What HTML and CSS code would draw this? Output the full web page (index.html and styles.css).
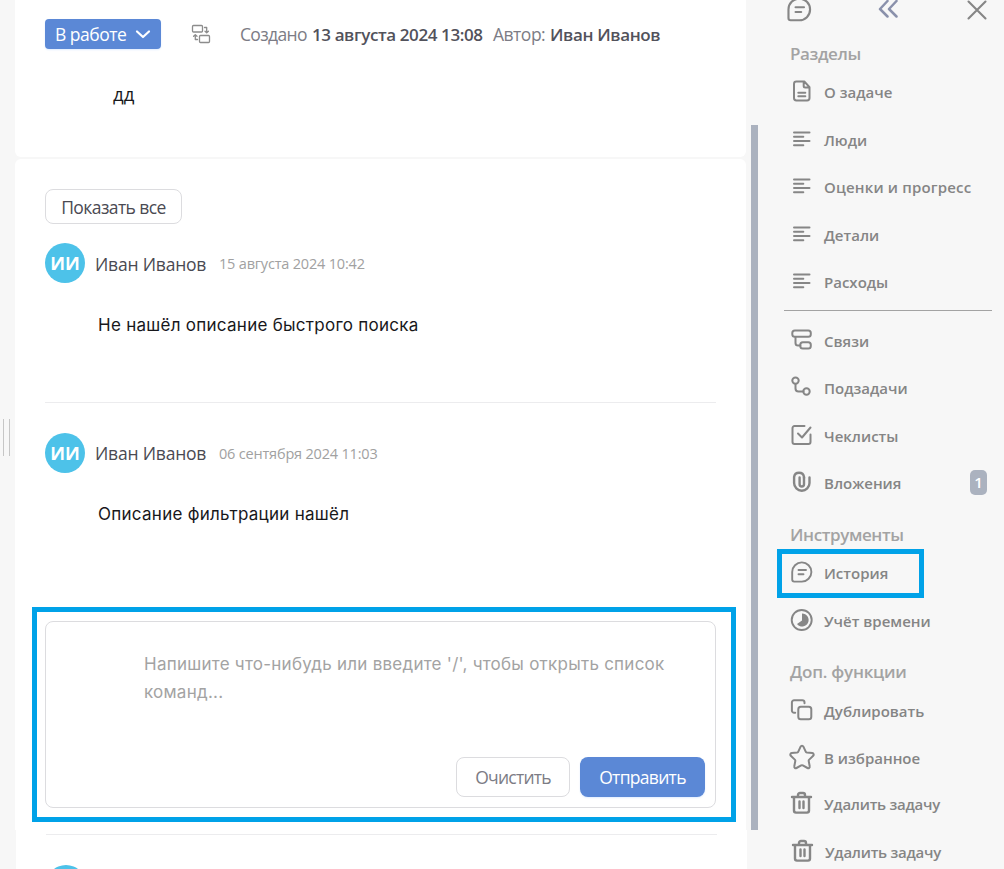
FILE: index.html
```
<!DOCTYPE html>
<html lang="ru">
<head>
<meta charset="utf-8">
<title>Задача</title>
<link rel="stylesheet" href="styles.css">
</head>
<body>
<svg class="defs" width="0" height="0">
  <symbol id="i-chat" viewBox="0 0 24 24"><path d="M2.200 12A9.600 9.600 0 1 1 11.800 21.600H4.200a2 2 0 0 1-2-2zM8.500 10h7.500M8.500 14.200h5"/></symbol>
  <symbol id="i-doc" viewBox="0 0 24 24"><path d="M6.500 2.500h7.800L19.500 8.200v10.900a2.400 2.400 0 0 1-2.400 2.400H6.400a2.400 2.400 0 0 1-2.400-2.400V4.900a2.400 2.400 0 0 1 2.400-2.400zM13.700 2.700v4.300a1.500 1.500 0 0 0 1.500 1.500h4.300M8.300 13.800h7M8.300 17.200h7"/></symbol>
  <symbol id="i-lines" viewBox="0 0 24 24"><path d="M4 5.500h15.500M4 9.700h9.300M4 14h15.500M4 18.300h9.300"/></symbol>
  <symbol id="i-links" viewBox="0 0 24 24"><rect x="2.300" y="2.500" width="18.500" height="6.300" rx="2.500"/><rect x="10.300" y="14.300" width="10.500" height="6.300" rx="2.500"/><path d="M5.500 9v6a2.500 2.500 0 0 0 2.500 2.500h2.300"/></symbol>
  <symbol id="i-sub" viewBox="0 0 24 24"><circle cx="5.500" cy="5.600" r="3.200"/><circle cx="16.500" cy="16.500" r="3.200"/><path d="M5.500 9v4.500a3 3 0 0 0 3 3h5"/></symbol>
  <symbol id="i-check" viewBox="0 0 24 24"><path d="M14.500 3H4.500A2 2 0 0 0 2.500 5v14a2 2 0 0 0 2 2h14a2 2 0 0 0 2-2v-7.500M8 10.500l4 4L20.500 4.500"/></symbol>
  <symbol id="i-clip" viewBox="0 0 24 24"><path d="M14 7.500v6.800a2.200 2.200 0 0 1-4.400 0V7.500"/><path d="M14 8V7a5 5 0 0 0-9.900 0v6a7.700 7.700 0 0 0 15.400 0V7.500"/></symbol>
  <symbol id="i-time" viewBox="0 0 24 24"><circle cx="11.700" cy="12" r="10"/><path class="solid" d="M12 5.500a6.500 6.500 0 1 1-5 10.500L12 12.500z"/></symbol>
  <symbol id="i-copy" viewBox="0 0 24 24"><rect x="8.300" y="8.700" width="13" height="12.600" rx="2.500"/><path d="M5.200 14.800H4.100A2.200 2.200 0 0 1 1.900 12.600V4.400A2.200 2.200 0 0 1 4.100 2.200h8.200a2.200 2.200 0 0 1 2.200 2.200v.8"/></symbol>
  <symbol id="i-star" viewBox="0 0 26 26"><path d="M11.600 2.600c.6-1.300 2.200-1.300 2.800 0l2.300 5c.2.500.7.800 1.200.9l5.400.6c1.300.2 1.800 1.700.9 2.700l-4 3.800c-.4.400-.6.900-.5 1.400l1 5.300c.3 1.300-1 2.300-2.200 1.700l-4.700-2.600a1.600 1.600 0 0 0-1.600 0L7.500 24c-1.200.6-2.500-.4-2.200-1.700l1-5.300c.1-.5-.1-1-.5-1.400l-4-3.800c-.9-1-.4-2.500.9-2.700l5.400-.6c.5-.1 1-.4 1.200-.9z"/></symbol>
  <symbol id="i-trash" viewBox="0 0 24 24"><path d="M2 6h19M4 6v13.600a2 2 0 0 0 2 2h11a2 2 0 0 0 2-2V6M8 5.500V4a2 2 0 0 1 2-2h3a2 2 0 0 1 2 2v1.500M9.500 10.500v6.500M13.500 10.500v6.500"/></symbol>
</svg>
<div class="app">
  <div class="gutter"><span class="grip"></span></div>
  <main class="main">
    <section class="card head">
      <div class="meta">
        <button class="status"><span>В работе</span><svg width="16" height="10" viewBox="0 0 16 10"><path d="M2 2.500L8 8l6-5.500"/></svg></button>
        <svg class="move" width="20" height="20" viewBox="0 0 20 20"><rect x="1.500" y="1.500" width="10" height="6.500" rx="1"/><rect x="8.500" y="11.500" width="10" height="7" rx="1"/><path d="M13.500 3.500h2.200v5M14 7.200l1.700 1.700 1.700-1.700M6.500 15.500H4.300v-4.700M2.600 12.300l1.700-1.700L6 12.300"/></svg>
        <span class="m-created">Создано</span><b class="m-date">13 августа 2024 13:08</b><span class="m-author">Автор:</span><b class="m-name">Иван Иванов</b>
      </div>
      <p class="title">дд</p>
    </section>
    <section class="card feed">
      <button class="btn all">Показать все</button>
      <article class="comment">
        <header><span class="avatar">ИИ</span><span class="who">Иван Иванов</span><time>15 августа 2024 10:42</time></header>
        <p>Не нашёл описание быстрого поиска</p>
      </article>
      <article class="comment second">
        <header><span class="avatar">ИИ</span><span class="who">Иван Иванов</span><time>06 сентября 2024 11:03</time></header>
        <p>Описание фильтрации нашёл</p>
      </article>
      <div class="mark">
        <div class="editor">
          <p>Напишите что-нибудь или введите '/', чтобы открыть список<br>команд...</p>
          <div class="actions"><button class="btn clear">Очистить</button><button class="btn send">Отправить</button></div>
        </div>
      </div>
    </section>
    <section class="rest"><div class="next"><span class="avatar"></span></div></section>
  </main>
  <div class="scroll"><span></span></div>
  <aside class="side">
    <div class="tools">
      <svg class="ic big"><use href="#i-chat"/></svg>
      <svg class="dbl" width="22" height="20" viewBox="0 0 22 20"><path d="M9.500 1L2 9l7.500 7.500M18.500 1L11 9l7.500 7.500"/></svg>
      <svg class="close" width="20" height="20" viewBox="0 0 20 20"><path d="M1.500 1.500l17 17M18.500 1.500l-17 17"/></svg>
    </div>
    <h3 class="sections">Разделы</h3>
    <nav>
      <a class="row"><svg class="ic"><use href="#i-doc"/></svg><span>О задаче</span></a>
      <a class="row"><svg class="ic"><use href="#i-lines"/></svg><span>Люди</span></a>
      <a class="row"><svg class="ic"><use href="#i-lines"/></svg><span class="wide">Оценки и прогресс</span></a>
      <a class="row"><svg class="ic"><use href="#i-lines"/></svg><span>Детали</span></a>
      <a class="row"><svg class="ic"><use href="#i-lines"/></svg><span>Расходы</span></a>
    </nav>
    <hr>
    <nav>
      <a class="row"><svg class="ic"><use href="#i-links"/></svg><span>Связи</span></a>
      <a class="row"><svg class="ic"><use href="#i-sub"/></svg><span>Подзадачи</span></a>
      <a class="row"><svg class="ic"><use href="#i-check"/></svg><span>Чеклисты</span></a>
      <a class="row"><svg class="ic bold"><use href="#i-clip"/></svg><span>Вложения</span><i class="count">1</i></a>
    </nav>
    <h3 class="instruments">Инструменты</h3>
    <nav>
      <a class="row picked"><svg class="ic mid"><use href="#i-chat"/></svg><span>История</span></a>
      <a class="row"><svg class="ic mid"><use href="#i-time"/></svg><span>Учёт времени</span></a>
    </nav>
    <h3 class="extra">Доп. функции</h3>
    <nav>
      <a class="row"><svg class="ic"><use href="#i-copy"/></svg><span>Дублировать</span></a>
      <a class="row fav"><svg class="ic star"><use href="#i-star"/></svg><span>В избранное</span></a>
      <a class="row short"><svg class="ic bold"><use href="#i-trash"/></svg><span class="tight">Удалить задачу</span></a>
      <a class="row last"><svg class="ic bold"><use href="#i-trash"/></svg><span class="tight">Удалить задачу</span></a>
    </nav>
  </aside>
</div>
</body>
</html>
```
FILE: styles.css
```
* { box-sizing: border-box; }
body { margin: 0; background: #f7f7f7; font-family: "Open Sans", "Noto Sans", sans-serif; color: #54545c; overflow: hidden; }
p, h3 { margin: 0; }
.defs { display: block; position: absolute; }
.app { display: flex; width: 1004px; height: 869px; overflow: hidden; }
svg { fill: none; stroke: #868686; stroke-width: 1.6; stroke-linecap: round; stroke-linejoin: round; flex: none; overflow: visible; }
button { font: inherit; margin: 0; padding: 0; }

.gutter { width: 15px; padding: 419px 0 0 3px; }
.grip { display: block; width: 7px; height: 37px; border: solid #c6c6c6; border-width: 0 1px; }

.main { width: 732px; flex: none; white-space: nowrap; }
.card { width: 731px; background: #fff; padding: 0 30px; }
.head { height: 157px; border-radius: 0 0 6px 6px; padding-top: 19px; }
.meta { display: flex; align-items: center; height: 30px; font-size: 17.5px; font-weight: 400; color: #7c7c85; }
.meta b { font-size: 17px; font-weight: 600; color: #52525b; }
.status { display: flex; align-items: center; width: 116px; height: 30px; padding: 0 10px; border: 0; border-radius: 4px; background: #5b88d6; box-shadow: 0 1px 2px #e0edff; color: #fff; font-weight: 400; letter-spacing: -.5px; justify-content: space-between; }
.status svg { stroke: #fff; stroke-width: 2.2; }
.move { margin: 0 29px 0 30px; stroke: #8c8c8c; stroke-width: 1.3; }
.m-created { width: 72px; letter-spacing: -.65px; }
.m-date { width: 181px; letter-spacing: -.4px; }
.m-author { width: 57px; letter-spacing: -.5px; }
.m-name { letter-spacing: -.36px; }
.title { margin: 33px 0 0 68px; font: 400 18.5px/24px "Open Sans", sans-serif; color: #18181b; }

.feed { margin-top: 2px; height: 671px; border-radius: 6px 6px 0 0; padding-top: 30px; }
.btn { display: block; border: 1px solid #dcdcdf; border-radius: 8px; background: #fff; font-size: 17.5px; font-weight: 400; letter-spacing: -.58px; color: #4a4a52; text-align: center; }
.all { width: 137px; height: 35px; padding-top: 1px; }
.comment { height: 160px; margin-top: 19px; border-bottom: 1px solid #ececee; }
.comment header { display: flex; align-items: center; height: 40px; }
.comment p { margin: 29px 0 0 53px; font: 400 17px/26px Inter, sans-serif; letter-spacing: .27px; color: #18181b; }
.avatar { display: block; width: 40px; height: 40px; border-radius: 50%; background: #4dc2e9; color: #fff; font-size: 18px; font-weight: 700; line-height: 40px; text-align: center; }
.who { width: 124px; padding: 2px 0 0 10px; font-size: 17.5px; font-weight: 400; letter-spacing: -.2px; color: #4a4a52; }
.who + time { padding: 1px 0 0 10px; font-size: 14.5px; letter-spacing: -.19px; color: #a1a1a1; }
.second { margin-top: 30px; height: 174px; border: 0; }
.second .who { padding-top: 0; }
.second p { margin-top: 28px; }
.mark { width: 704px; height: 215px; margin-left: -13px; border: 5px solid #00a2e8; padding: 9px 15px 0 8px; }
.editor { width: 671px; height: 187px; border: 1px solid #dcdcdf; border-radius: 8px; padding: 28px 10px 10px 98px; display: flex; flex-direction: column; justify-content: space-between; }
.editor p { font: 400 17px/28px Inter, sans-serif; letter-spacing: .25px; color: #a3a3a3; }
.actions { display: flex; justify-content: flex-end; gap: 10px; }
.actions .btn { height: 40px; }
.actions .clear { width: 114px; color: #7c7c85; letter-spacing: -.75px; }
.actions .send { width: 125px; border: 0; background: #5b88d6; color: #fff; font-weight: 400; letter-spacing: -.7px; box-shadow: 0 1px 2px #e0edff; }
.rest { width: 731px; height: 39px; margin-left: 1px; background: #fff; padding: 4px 30px 0; }
.next { border-top: 1px solid #ececee; padding-top: 30px; }

.scroll { width: 11px; padding: 125px 0 0 4px; }
.scroll span { display: block; width: 7px; height: 705px; background: #abb2bf; }

.side { width: 246px; flex: none; padding-left: 32px; white-space: nowrap; }
.tools { display: flex; height: 40px; align-items: flex-start; }
.ic { width: 24px; height: 24px; }
.ic.big { width: 27px; height: 27px; margin: -4px 0 0 -4px; stroke-width: 1.9; }
.dbl { margin: 0 0 0 65px; stroke: #8a91ab; stroke-width: 2.5; }
.close { margin-left: 66.5px; stroke-width: 2.1; }
.side h3 { font-size: 17px; line-height: 28px; font-weight: 600; letter-spacing: -.4px; color: #a3a3a3; }
.row { display: flex; align-items: center; height: 47.5px; font-size: 15px; font-weight: 600; color: #858585; }
.row .ic { margin: -2px 10.5px 0 -.5px; stroke-width: 2; }
.row .ic.star { width: 26px; height: 26px; margin: -2px 9.5px 0 -1.5px; }
.row .ic.bold { stroke-width: 2.4; }
.row .ic.mid { stroke-width: 1.9; }
.wide { letter-spacing: .17px; }
.tight { letter-spacing: -.25px; }
.solid { fill: #868686; stroke: none; }
.side hr { width: 208px; height: 1px; margin: 4px 0 6px -6px; border: 0; background: #a3a3a3; }
.count { width: 17px; height: 25px; margin: -1px 17px 0 auto; border-radius: 5px; background: #abb2bf; color: #fff; font-size: 15px; font-style: normal; line-height: 25px; text-align: center; }
.side .sections { height: 28.5px; }
.side .instruments { padding-top: 13.5px; height: 42px; }
.side .extra { padding-top: 13.5px; height: 43px; letter-spacing: -.25px; }
.picked { width: 147px; height: 49px; margin: 0 0 -1px -13px; padding: 0 0 1px 8px; border: 5px solid #00a2e8; }
.fav { height: 46.5px; }
.short { height: 45px; }
.last { height: 50px; padding-left: 1px; }
```
